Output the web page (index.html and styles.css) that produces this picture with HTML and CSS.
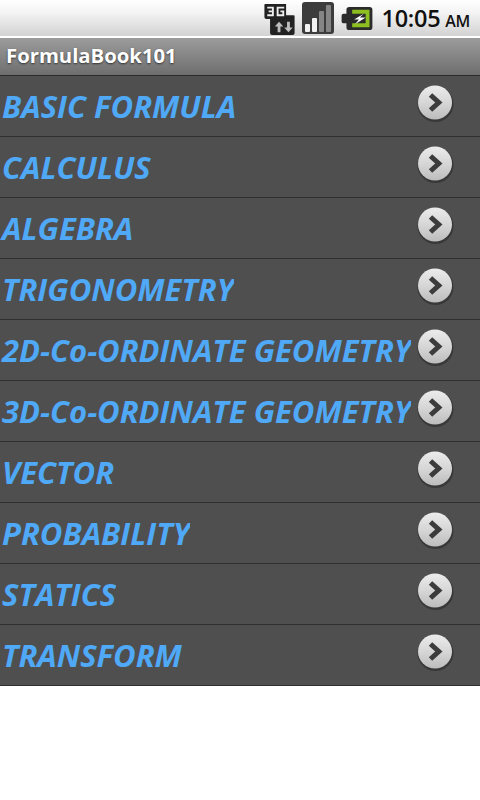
FILE: index.html
```html
<!DOCTYPE html>
<html lang="en">
<head>
<meta charset="utf-8">
<title>FormulaBook101</title>
<link rel="stylesheet" href="styles.css">
</head>
<body>
<svg class="defs" width="0" height="0" aria-hidden="true">
  <defs>
    <linearGradient id="btn" x1="0" y1="0" x2="0" y2="1">
      <stop offset="0" stop-color="#ececec"/>
      <stop offset="0.55" stop-color="#d4d4d4"/>
      <stop offset="1" stop-color="#bcbcbc"/>
    </linearGradient>
    <symbol id="chev" viewBox="0 0 38 38">
      <circle cx="19.500" cy="20" r="18" fill="#222" opacity=".5"/>
      <circle cx="19" cy="18.500" r="17" fill="url(#btn)"/>
      <path d="M14.500 11 L22.800 18.500 L14.500 26" fill="none" stroke="#3c3c3c" stroke-width="5" stroke-linejoin="miter"/>
    </symbol>
  </defs>
</svg>
<header class="status">
  <svg class="ic-3g" width="33" height="33" viewBox="0 0 34 35">
    <path d="M2 2h22v12h8a1 1 0 0 1 1 1v18a2 2 0 0 1-2 2H9a2 2 0 0 1-2-2V18H3a2 2 0 0 1-2-2V3a1 1 0 0 1 1-1z" fill="#222"/>
    <path d="M4 5h7v10H4v-2h5v-2H5.500V9H9V7H4zM14 5h8v2h-6v6h4v-2h-2V9h4v6h-8z" fill="#eee"/>
    <path d="M15 32v-6h-3l4.500-5 4.500 5h-3v6zM25 21v6h-3l4.500 5 4.500-5h-3v-6z" fill="#bdbdbd"/>
  </svg>
  <svg class="ic-sig" width="32" height="32" viewBox="0 0 32 32">
    <rect x="0" y="0" width="32" height="32" rx="3" fill="#3c3c3c"/>
    <rect x="3" y="22" width="5" height="8" rx="1" fill="#f2f2f2"/>
    <rect x="10" y="16" width="5" height="14" rx="1" fill="#f2f2f2"/>
    <rect x="17" y="9" width="5" height="21" rx="1" fill="#858585"/>
    <rect x="24" y="3" width="5" height="27" rx="1" fill="#858585"/>
  </svg>
  <svg class="ic-bat" width="32" height="25" viewBox="0 0 32 26">
    <path d="M8 1h21a3 3 0 0 1 3 3v18a3 3 0 0 1-3 3H8a3 3 0 0 1-3-3v-4H2a2 2 0 0 1-2-2v-6a2 2 0 0 1 2-2h3V4a3 3 0 0 1 3-3z" fill="#2b2b2b"/>
    <path d="M11 4h18v18H11v-4h14V8H11z" fill="#8cbf1f"/>
    <path d="M23 8l-10 6h5l-4 5 11-7h-6l4-4z" fill="#fff"/>
  </svg>
  <span class="clock">10:05<span class="ampm">AM</span></span>
</header>
<div class="title">FormulaBook101</div>
<ul class="menu">
  <li class="row"><span class="label">BASIC FORMULA</span><svg class="go" width="38" height="38"><use href="#chev"/></svg></li>
  <li class="row"><span class="label">CALCULUS</span><svg class="go" width="38" height="38"><use href="#chev"/></svg></li>
  <li class="row"><span class="label">ALGEBRA</span><svg class="go" width="38" height="38"><use href="#chev"/></svg></li>
  <li class="row"><span class="label">TRIGONOMETRY</span><svg class="go" width="38" height="38"><use href="#chev"/></svg></li>
  <li class="row"><span class="label">2D-Co-ORDINATE GEOMETRY</span><svg class="go" width="38" height="38"><use href="#chev"/></svg></li>
  <li class="row"><span class="label">3D-Co-ORDINATE GEOMETRY</span><svg class="go" width="38" height="38"><use href="#chev"/></svg></li>
  <li class="row"><span class="label">VECTOR</span><svg class="go" width="38" height="38"><use href="#chev"/></svg></li>
  <li class="row"><span class="label">PROBABILITY</span><svg class="go" width="38" height="38"><use href="#chev"/></svg></li>
  <li class="row"><span class="label">STATICS</span><svg class="go" width="38" height="38"><use href="#chev"/></svg></li>
  <li class="row"><span class="label">TRANSFORM</span><svg class="go" width="38" height="38"><use href="#chev"/></svg></li>
</ul>
</body>
</html>
```
FILE: styles.css
```css
html, body { margin: 0; padding: 0; background: #fff; }
body { width: 480px; height: 800px; overflow: hidden; font-family: "Open Sans", "Noto Sans", sans-serif; }
.defs { position: absolute; }
.status {
  height: 36px; padding-bottom: 2px;
  display: flex; align-items: center; justify-content: flex-end;
  background: linear-gradient(#ffffff 0, #f4f4f4 12px, #d2d2d2 36px, #ffffff 36px);
}
.ic-3g { margin-right: 6px; flex: none; }
.ic-sig { margin-right: 7px; flex: none; }
.ic-bat { margin-right: 9px; flex: none; }
.clock { font-size: 23.5px; font-weight: 600; color: #111; margin-right: 10px; letter-spacing: -0.3px; white-space: nowrap; }
.ampm { font-size: 16px; font-weight: 600; margin-left: 5px; }
.title {
  height: 38px; line-height: 35px; padding-left: 6px; box-sizing: border-box;
  background: linear-gradient(#9c9c9c, #6e6e6e);
  border-bottom: 1px solid #2a2a2a;
  color: #fff; font-size: 20.300px; font-weight: 700;
  text-shadow: 0 1px 2px #333;
}
.menu { list-style: none; margin: 0; padding: 0; background: #4f4f4f; }
.row {
  height: 61px; box-sizing: border-box;
  display: flex; align-items: flex-start;
  border-bottom: 1px solid #2f2f2f;
}
.label {
  flex: none; overflow: hidden; white-space: nowrap;
  padding-left: 2px;
  font-size: 31px; font-weight: 700; font-style: italic; line-height: 61px;
  color: #4fa9f6;
}
.go { margin: 8px 26px 0 auto; flex: none; }
```
